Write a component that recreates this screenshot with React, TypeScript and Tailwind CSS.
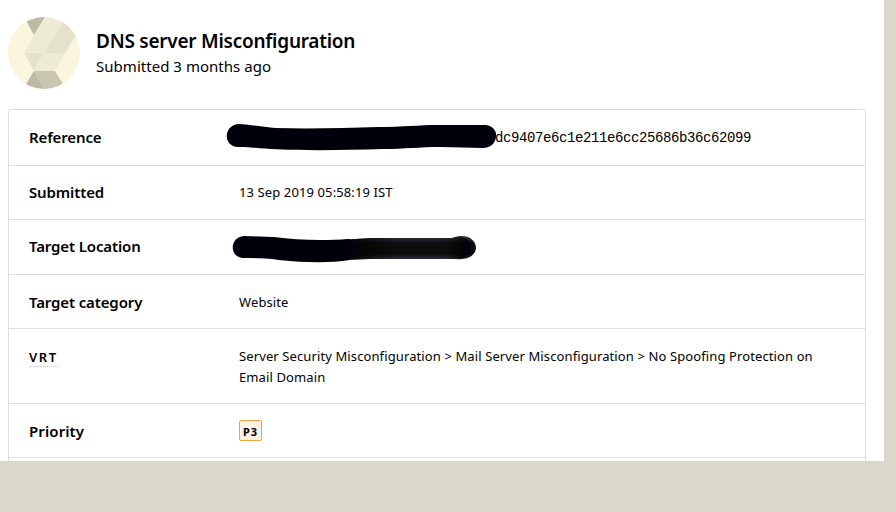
import type { ReactNode } from 'react';

function Avatar() {
  return (
    <svg width="72" height="72" viewBox="0 0 72 72" className="shrink-0" aria-hidden="true">
      <defs>
        <clipPath id="disc"><circle cx="36" cy="36" r="36" /></clipPath>
      </defs>
      <g clipPath="url(#disc)">
        <rect width="72" height="72" fill="#faf6de" />
        <path d="M16 0H37L26 18Z" fill="#bcb9a6" />
        <path d="M37 0H58L36 36H16L26 18Z" fill="#edebd3" />
        <path d="M58 0H79L57 36H36Z" fill="#e4e2cb" />
        <path d="M16 36H36L26 54Z" fill="#e4e2cb" />
        <path d="M36 36H57L47 54H26Z" fill="#edebd3" />
        <path d="M26 54L37 72H15Z" fill="#bcb9a6" />
        <path d="M26 54H47L58 72H37Z" fill="#c9c6b0" />
      </g>
    </svg>
  );
}

function Row({ label, height, pad, children }: { label: ReactNode; height: string; pad: string; children?: ReactNode }) {
  return (
    <div className={`flex shrink-0 border-b border-[#dddddd] pl-5 ${height} ${pad}`}>
      <div className="-mt-px w-[210px] shrink-0 text-[15px] leading-[22px] font-semibold tracking-[-0.13px]">{label}</div>
      <div className="flex-1 text-[13px] leading-[21px] tracking-[0.11px]">{children}</div>
    </div>
  );
}

export default function App() {
  return (
    <main className="h-[512px] w-[896px] overflow-hidden bg-[#dad8ca] text-black" style={{ fontFamily: '"Noto Sans", sans-serif' }}>
      <div className="flex h-[461px] w-[884px] flex-col overflow-hidden bg-white pl-2">
        <header className="flex h-[109px] shrink-0 gap-4 pt-[17px]">
          <Avatar />
          <div className="pt-[11px]">
            <h1 className="text-[19px] leading-[26px] font-semibold tracking-[-0.25px] whitespace-nowrap">DNS server Misconfiguration</h1>
            <p className="text-[15px] leading-[24px] tracking-[0.03px] whitespace-nowrap">Submitted 3 months ago</p>
          </div>
        </header>
        <section className="flex h-[380px] w-[858px] shrink-0 flex-col rounded-[3px] border border-[#dddddd]">
          <Row label="Reference" height="h-[56px]" pad="pt-[17px]">
            <div className="relative flex h-[22px] items-center pl-[256px]">
              <svg className="absolute -top-[7px] -left-[15px]" width="280" height="34" viewBox="0 0 280 34" aria-hidden="true">
                <defs><filter id="softA" x="-5%" y="-20%" width="110%" height="140%"><feGaussianBlur stdDeviation=".7" /></filter></defs>
                <path filter="url(#softA)" d="M14 4C24 4 36 7 51 8C86 9 122 8 154 7C180 7 194 5 215 5H262C269 6 273 11 272 17C271 24 266 28 259 28L218 27C194 27 181 29 159 29C122 30 84 31 47 29C33 28 25 27 14 27C-1 26-1 6 14 4Z" fill="#030308" />
              </svg>
              <span className="text-[14px] tracking-[-0.4px]" style={{ fontFamily: '"Liberation Mono", monospace' }}>dc9407e6c1e211e6cc25686b36c62099</span>
            </div>
          </Row>
          <Row label="Submitted" height="h-[54px]" pad="pt-[16px]">13 Sep 2019 05:58:19 IST</Row>
          <Row label="Target Location" height="h-[55px]" pad="pt-[16px]">
            <div className="relative h-[22px]">
              <svg className="absolute -top-[5px] -left-[9px]" width="252" height="34" viewBox="0 0 252 34" aria-hidden="true">
                <defs>
                  <filter id="softB" x="-5%" y="-20%" width="110%" height="140%"><feGaussianBlur stdDeviation=".6" /></filter>
                  <linearGradient id="edge" x1="0" y1="0" x2="0" y2="1">
                    <stop offset="0" stopColor="#36363d" />
                    <stop offset=".3" stopColor="#09090e" />
                    <stop offset=".75" stopColor="#09090e" />
                    <stop offset="1" stopColor="#36363d" />
                  </linearGradient>
                  <linearGradient id="fade" x1="0" y1="0" x2="1" y2="0">
                    <stop offset="0" stopColor="#030308" />
                    <stop offset=".4" stopColor="#030308" stopOpacity="0" />
                    <stop offset=".8" stopColor="#030308" stopOpacity="0" />
                    <stop offset="1" stopColor="#030308" />
                  </linearGradient>
                </defs>
                <path filter="url(#softB)" d="M112 9L140 7H222C238 1 246 10 246 17C245 26 236 29 226 28H140L112 29Z" fill="url(#edge)" />
                <path filter="url(#softB)" d="M112 9L140 7H222C236 4 241 10 241 17C241 26 234 28 226 28H140L112 29Z" fill="url(#fade)" />
                <path filter="url(#softB)" d="M14 5L44 6C66 9 91 10 120 8V29C100 32 78 32 49 29C37 27 26 27 14 27C-1 27-1 6 14 5Z" fill="#030308" />
              </svg>
            </div>
          </Row>
          <Row label="Target category" height="h-[54px]" pad="pt-[17px]">Website</Row>
          <Row
            label={<span className="mt-[2px] inline-block border-b border-dotted border-[#cccccc] text-[13px] leading-[18px] tracking-[1.6px]">VRT</span>}
            height="h-[75px]"
            pad="pt-[17px]"
          >
            Server Security Misconfiguration &gt; Mail Server Misconfiguration &gt; No Spoofing Protection on<br />Email Domain
          </Row>
          <Row label={<span className="block pt-px tracking-[0.1px]">Priority</span>} height="h-[54px]" pad="pt-[16px]">
            <span className="flex h-[21px] w-[23px] items-center justify-center rounded-[2px] border border-[#eea545] bg-[#fdf0e4] pt-[2px] text-[11px] leading-none font-bold tracking-[1px]">P3</span>
          </Row>
        </section>
      </div>
    </main>
  );
}
